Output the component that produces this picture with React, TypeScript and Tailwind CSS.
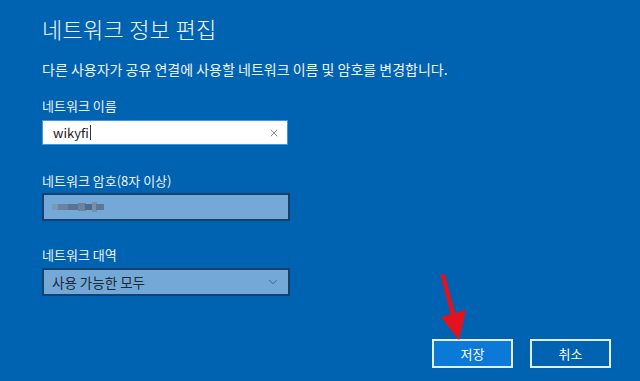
import { X, ChevronDown } from 'lucide-react'

const font = { fontFamily: '"Noto Sans CJK KR", "Noto Sans", sans-serif' }

const PasswordBlur = () => (
  <svg width="56" height="10" viewBox="0 0 56 10">
    <rect x="0" y="2" width="8" height="6" fill="#7f98b2" />
    <rect x="6" y="2" width="10" height="6" fill="#6a84a0" />
    <rect x="16" y="2" width="10" height="6" fill="#5a7592" />
    <rect x="26" y="1" width="8" height="8" fill="#6a84a0" />
    <rect x="33" y="2" width="9" height="6" fill="#4e6b8a" />
    <rect x="40" y="0" width="5" height="10" fill="#7890aa" />
    <rect x="44" y="2" width="8" height="6" fill="#5c7794" />
  </svg>
)

const App = () => {
  return (
    <div
      className="relative w-[640px] h-[381px] overflow-hidden bg-[#0063b1] text-white"
      style={font}
    >
      <div className="flex flex-col pl-[42px] pt-[14px]">
        <h1 className="h-[28px] leading-[28px] text-[22px] font-light tracking-[0.3px] text-[#f2f6fa]">
          네트워크 정보 편집
        </h1>
        <p className="mt-[17px] h-[20px] leading-[20px] text-[14px] text-[#eef3f8]">
          다른 사용자가 공유 연결에 사용할 네트워크 이름 및 암호를 변경합니다.
        </p>

        <label className="mt-[17px] h-[20px] leading-[20px] text-[13px] text-[#eef3f8]">
          네트워크 이름
        </label>
        <div className="mt-[4px] flex h-[25px] w-[246px] items-center justify-between border border-[#3b9ae6] bg-white pl-[10px] pr-[7px]">
          <div className="flex items-center text-[13px] text-[#1a1a1a]">
            <span>wikyfi</span>
            <span className="ml-[1px] h-[15px] w-px bg-[#333]" />
          </div>
          <X size={12} strokeWidth={1.5} className="text-[#666]" />
        </div>

        <label className="mt-[26px] h-[20px] leading-[20px] text-[13px] text-[#eef3f8]">
          네트워크 암호(8자 이상)
        </label>
        <div className="mt-[2px] flex h-[28px] w-[248px] items-center border-2 border-[#16416e] bg-[#74a8d6] pl-[8px]">
          <PasswordBlur />
        </div>

        <label className="mt-[24px] h-[20px] leading-[20px] text-[13px] text-[#eef3f8]">
          네트워크 대역
        </label>
        <div className="mt-[3px] flex h-[28px] w-[248px] items-center justify-between border-2 border-[#16416e] bg-[#74a8d6] pl-[8px] pr-[8px]">
          <span className="text-[13.5px] text-[#1a2a3a]">사용 가능한 모두</span>
          <ChevronDown size={14} strokeWidth={1.25} className="text-[#2d4a68]" />
        </div>
      </div>

      <div className="mt-[43px] flex justify-end gap-[17px] pr-[29px]">
        <button className="h-[29px] w-[81px] border-2 border-[#e4ecf4] bg-[#0a79d8] text-[13px] text-white">
          저장
        </button>
        <button className="h-[29px] w-[81px] border-2 border-[#e4ecf4] bg-[#0063b1] text-[13px] text-white">
          취소
        </button>
      </div>

      {/* red arrow pointing at save */}
      <svg className="absolute left-0 top-0" width="640" height="381" viewBox="0 0 640 381">
        <line x1="443" y1="276" x2="454" y2="318" stroke="#e3131d" strokeWidth="4.5" strokeLinecap="round" />
        <polygon points="441,317 466,310 459,340" fill="#e3131d" />
      </svg>
    </div>
  )
}

export default App
